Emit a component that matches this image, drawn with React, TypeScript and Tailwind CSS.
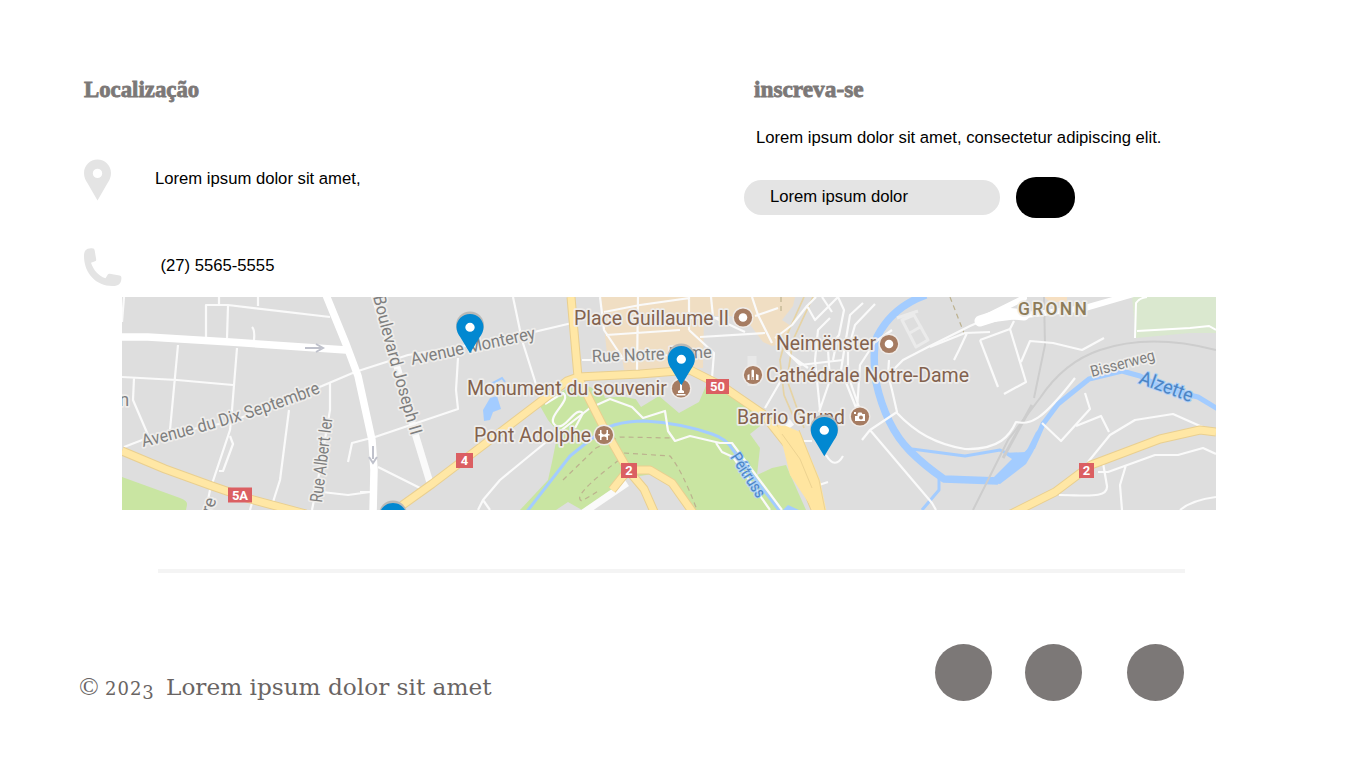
import React from "react";

const PIN =
  "M13.5 0C6 0 0 6 0 13.5 0 17.8 1.5 20.6 4 24.6L13.5 41 23 24.6C25.500 20.600 27 17.800 27 13.500 27 6 21 0 13.500 0Zm0 9.200a4.700 4.700 0 1 1 0 9.400 4.700 4.700 0 0 1 0-9.400Z";

const minorRoads = [
  "M122 322L124 297M219 297V304M206 337V305L228 305 330 317M228 306L227 338M258 297V306M252 327Q255 330 254 340",
  "M122 377L177 380 233 385M134 378L133 400 148 435M178 345L170 430M237 348L232 410 230 430 210 490 206 510M230 436L233 444 223 471H219",
  "M124 447L150 437 230 422 322 386 355 372 408 355 500 340 572 323M289 410L280 480 273 502M330 383V410L318 480 312 510M348 462L352 443 375 437 458 409 456 390 458 358",
  "M378 467L422 489M322 492L348 495 370 492M252 503L250 510M513 297L522 340 540 397M360 492H372",
  "M478 510L483 500 500 480 545 443 590 408 610 399 632 407 643 418 665 411 668 431 675 441 690 436 720 443 732 443 782 510M716 443L722 452 733 457 770 510M490 510L483 500M582 360H600L713 352",
  "M545 404L563 393C573 400 545 417 555 425S575 405 583 413L575 428",
  "M600 297L604 330 622 357M638 297L637 370M689 297V330M604 312L640 305 690 298M606 335L680 330M700 337L765 333M689 330L714 353 712 378M711 297L713 317 745 332M690 318H720M752 297L758 315 772 343M755 316L778 308",
  "M816 297L807 306 815 320 830 305 838 297M807 306L792 325 775 338M838 297L844 310 839 335 828 350 830 380 819 412M830 318L818 330 815 360 820 410M863 303L850 315 845 345 841 370 857 410M875 304L855 325 848 350 848 375 860 410M892 330L875 342 860 365 857 410",
  "M785 350L800 365 843 360M783 377L765 408M780 337L790 355 808 368M822 297L832 312M837 340L833 360",
  "M889 360L888 375 892 390 897 412 870 430 862 440M870 430L932 503 936 510M888 375L903 360 930 346 970 326 995 315M897 413C915 432 935 444 965 449 1000 450 1010 435 1016 422 1030 425 1041 422 1075 378 1110 365 1150 352L1173 358 1216 372",
  "M930 347L965 333 990 332M967 333L959 350 954 360M980 340L1010 329 1026 382 1004 394M980 340L998 387M1021 362L1030 341 1053 343 1082 350 1104 338M1010 329L1014 321",
  "M1042 423L1061 441 1090 409 1085 393M1076 426L1101 416 1109 432M1088 462L1110 435 1135 420 1173 414 1200 426 1212 430M1098 472H1108L1155 455 1178 455 1203 448 1216 454M1126 465L1120 485 1122 510M1103 463L1107 486C1108 499 1085 495 1059 495M1180 510Q1192 500 1216 497",
  "M794 441L812 441M826 455Q835 470 843 456M816 486L828 482",
];

const yellowRoads =
  "M122 451L165 469 212 486 250 499 306 514M390 514L432 484 540 402 567 381 578 377 640 374 690 370 722 386 763 414 790 448 817 514M571 297L578 377 605 430 628 470 644 489 655 514M612 490L628 470 650 470 672 483 694 514M1011 514L1055 492 1091 465 1160 439 1200 430 1216 432";

function Badge({ x, y, w, label }: { x: number; y: number; w: number; label: string }) {
  return (
    <g>
      <rect x={x} y={y} width={w} height="15" fill="#db5f62" />
      <text x={x + w / 2} y={y + 12} fill="#fff" fontSize="13" fontWeight="700" textAnchor="middle">
        {label}
      </text>
    </g>
  );
}

function Poi({ x, y, ring }: { x: number; y: number; ring?: boolean }) {
  return (
    <g>
      <circle cx={x} cy={y} r="10.600" fill="#efebe8" />
      <circle cx={x} cy={y} r="9.100" fill="#a67c62" />
      {ring && <circle cx={x} cy={y} r="4.300" fill="#fff" />}
    </g>
  );
}

function MapPin({ x, y }: { x: number; y: number }) {
  return (
    <g transform={`translate(${x - 13.5} ${y})`}>
      <circle cx="13.500" cy="11.500" r="14" fill="#b9b9b7" />
      <circle cx="13.500" cy="13.500" r="6" fill="#fff" />
      <path d={PIN} transform="scale(1 .96)" fill="#0288d1" />
    </g>
  );
}

function CityMap() {
  return (
    <svg
      viewBox="122 297 1094 213"
      className="ml-[122px] block h-[213px] w-[1094px] shrink-0 overflow-hidden"
      fontFamily="Roboto, 'Liberation Sans', sans-serif"
      fill="none"
    >
      <rect x="122" y="297" width="1094" height="213" fill="#dedede" />
      <path d="M122 477L180 498Q188 501 187 505L186 510H122Z" fill="#c9e5a2" />
      <path d="M540 406L578 381 600 392 640 400 700 378 722 390 768 420 750 434 760 448 757 475 772 468 786 465 806 510H520L548 480 552 462 558 432 548 420Z" fill="#c9e5a2" />
      <path d="M598 378L700 373 708 381 699 402 679 413 659 396 641 407 633 395 605 398Z" fill="#dedede" />
      <path d="M628 478L652 474 668 484 692 510H583Z M556 510L568 502 582 510Z" fill="#dedede" />
      <path d="M601 297H795L793 306 782 320 791 326 785 343 772 346 763 342 748 322 730 316H704L703 368 624 370 622 357 607 354Z" fill="#f0dec3" />
      <path d="M1132 297H1216V333L1190 333 1136 338Z" fill="#dae8cf" />
      <path d="M1044 297H1067V302H1050Z" fill="#f6dfc1" />

      <g stroke="#a3ccff" strokeLinejoin="round">
        <path d="M525 514L570 456 595 436Q610 421 645 421 680 423 712 434 727 439 733 450L782 514" strokeWidth="3" />
        <path d="M926 295Q892 307 877 337 872 350 876 382 886 427 910 451 925 466 944 479L998 481" strokeWidth="7.500" />
        <path d="M994 481L1020 460 1033 447 1043 424 1058 404 1089 379 1122 371 1140 376 1165 389 1198 397 1218 409" strokeWidth="5" />
        <path d="M912 449L965 456 1000 450 1017 458M939 478V490L922 510" strokeWidth="3" />
      </g>
      <path d="M994 477L1012 459 1003 453 1026 452 1036 432 1046 422 1033 452 1026 464 1000 484 980 482Z" fill="#a3ccff" />
      <path d="M490 398L497 396 501 409 493 412 490 420 484 421 483 410Z" fill="#a3ccff" />
      <path d="M491 384L502 378 505 382" stroke="#a3ccff" strokeWidth="2" />
      <path d="M783 510L788 505 799 510Z" fill="#a3ccff" />

      <g stroke="#cdcdcd" strokeWidth="2">
        <path d="M1044 297L1045 345 1034 398M973 510L1008 440 1040 398Q1064 362 1100 350 1150 333 1216 350" />
        <path d="M1003 458L1032 405" strokeWidth="3" />
      </g>
      <g stroke="#bcb18e" strokeWidth="1.200" strokeDasharray="5 4">
        <path d="M563 480L596 448 620 437 672 438M624 453L670 456Q682 470 697 510M619 460Q570 497 582 501L600 490M950 297L964 333M781 297V312" />
      </g>
      <path d="M804 297L786 337 780 360 784 395 797 425M813 297L793 340 787 380 804 428" stroke="#e6d3a4" strokeWidth="1.700" />

      <g stroke="#fafafa" strokeLinejoin="round" strokeWidth="2.200">
        {minorRoads.map((d, i) => (
          <path key={i} d={d} />
        ))}
        <path d="M122 337L148 337 230 342 346 350M326 295L346 344 358 376 372 440 374 470 373 514" stroke="#fff" strokeWidth="7.500" />
        <path d="M374 295L398 370 414 430 431 486" strokeWidth="7" />
        <path d="M583 513L627 483" strokeWidth="7" />
        <path d="M978 321L1026 315 1085 308 1137 293M978 321L1024 298" stroke="#fff" strokeWidth="6" strokeLinecap="round" />
        <path d="M980 321L1005 313 1024 315" stroke="#fff" strokeWidth="11" strokeLinecap="round" />
        <path d="M784 428L792 422" strokeWidth="7" />
        <path d="M902 320L916 347 928 340 914 315ZM897 318L918 311M908 334L922 326" stroke="#ebebeb" strokeWidth="3" />
        <path d="M752 356V386" stroke="#e8e8e8" strokeWidth="9" />
      </g>
      <path d={yellowRoads} stroke="#e9cf90" strokeWidth="9" strokeLinejoin="round" />
      <path d={yellowRoads} stroke="#ffe7a5" strokeWidth="7" strokeLinejoin="round" />
      <path d="M777 422L800 432 820 480 827 514H816L790 475Z" fill="#ffe5a0" />
      <path d="M782 434L800 459 812 488M799 430L819 480 825 510" stroke="#edd391" />
      <path d="M305 348H321M316 344L323 348 316 352M373 446V459M369 457L373 463 377 457" stroke="#bfc1cb" strokeWidth="2" />
      <path d="M1135 338L1136 303Q1139 298 1147 297M1137 331L1190 328 1209 326 1216 330" stroke="#fff" strokeWidth="2" />

      <path id="septembre" d="M143 447Q245 423 325 391" />
      <path id="boulevard" d="M373 297Q386 350 412 439" />
      <g stroke="#eeedeb" strokeWidth="3.500" strokeLinejoin="round" paintOrder="stroke">
        <g fill="#7f7f7f" fontSize="17.500">
          <text x="119.500" y="406">n</text>
          <text>
            <textPath href="#septembre" textLength="186" lengthAdjust="spacingAndGlyphs">
              Avenue du Dix Septembre
            </textPath>
          </text>
          <text transform="translate(322 503) rotate(-83)" textLength="86" lengthAdjust="spacingAndGlyphs">
            Rue Albert Ier
          </text>
          <text>
            <textPath href="#boulevard" textLength="144" lengthAdjust="spacingAndGlyphs">
              Boulevard Joseph II
            </textPath>
          </text>
          <text transform="translate(412 365) rotate(-12)" textLength="127" lengthAdjust="spacingAndGlyphs">
            Avenue Monterey
          </text>
          <text transform="translate(592 362) rotate(-2)" fontSize="17" textLength="120" lengthAdjust="spacingAndGlyphs">
            Rue Notre Dame
          </text>
          <text transform="translate(1092 377) rotate(-15)" fontSize="15.500" textLength="66" lengthAdjust="spacingAndGlyphs">
            Bisserweg
          </text>
          <text transform="translate(212 514) rotate(-72)">re</text>
        </g>
        <g fill="#83624e" fontSize="20">
          <text x="574" y="325" textLength="155" lengthAdjust="spacingAndGlyphs">Place Guillaume II</text>
          <text x="776" y="350" textLength="100" lengthAdjust="spacingAndGlyphs">Neimënster</text>
          <text x="766" y="382" textLength="203" lengthAdjust="spacingAndGlyphs">Cathédrale Notre-Dame</text>
          <text x="467" y="395" textLength="200" lengthAdjust="spacingAndGlyphs">Monument du souvenir</text>
          <text x="737" y="424" textLength="108" lengthAdjust="spacingAndGlyphs">Barrio Grund</text>
          <text x="474" y="442" textLength="117" lengthAdjust="spacingAndGlyphs">Pont Adolphe</text>
        </g>
        <text x="1018" y="315" fill="#8d7c59" fontSize="17.500" fontWeight="500" textLength="69">GRONN</text>
      </g>
      <g fill="#4c85c5" stroke="#a9cff8" strokeWidth="2" paintOrder="stroke">
        <text transform="translate(1138 383) rotate(20)" fontSize="19" textLength="56" lengthAdjust="spacingAndGlyphs">
          Alzette
        </text>
        <text transform="translate(730 457) rotate(57)" fontSize="16" textLength="50" lengthAdjust="spacingAndGlyphs">
          Péitruss
        </text>
      </g>

      <Poi x={743} y={317.5} ring />
      <Poi x={889} y={344} ring />
      <Poi x={753} y={375} />
      <Poi x={681} y={388.5} />
      <Poi x={604} y={435} />
      <Poi x={860} y={416.5} />
      <g fill="#fff">
        <path d="M747.500 380V375L749.500 374V380ZM751.500 380V370.500Q752.800 368.500 754 370.500V380H753.300V377H752.300V380ZM756 380V374L758.500 375V380Z" />
        <path d="M680 384H682V390L684 391V393H678V391L680 390ZM676.500 394H685.500V395.500H676.500Z" />
        <path d="M600 430H601.500V433Q604 436 606.500 433V430H608V434H609.500V435.500H608V440H606.500V437.500Q604 435.500 601.500 437.500V440H600V435.500H598.500V434H600Z" />
        <path fillRule="evenodd" d="M857.500 414L858.500 412.500H861.500L862.500 414H865V421H855V416H857.500ZM861 415.500A2 2 0 1 0 861 419.500 2 2 0 0 0 861 415.500ZM854 412H856V414H854Z" />
      </g>

      <Badge x={228} y={487.5} w={24} label="5A" />
      <Badge x={456} y={453} w={17} label="4" />
      <Badge x={706} y={379} w={23} label="50" />
      <Badge x={621} y={463} w={16} label="2" />
      <Badge x={1079} y={463} w={15} label="2" />

      <MapPin x={470} y={314} />
      <MapPin x={681.3} y={346} />
      <MapPin x={824.3} y={417} />
      <MapPin x={393} y={503} />
    </svg>
  );
}

export default function App() {
  return (
    <main className="flex h-[768px] w-[1366px] flex-col overflow-hidden bg-white font-['Liberation_Sans',sans-serif] text-[16.67px] leading-5 text-black">
      <div className="flex h-[297px] shrink-0 pt-[77px]">
        <section className="w-[744px] pl-[84px]">
          <h2 className="font-['Liberation_Serif',serif] text-[22.8px] font-bold leading-[26px] text-[#7c7877] [-webkit-text-stroke:0.8px_#7c7877]">
            Localização
          </h2>
          <div className="mt-[56px] flex h-[42px] items-start">
            <svg viewBox="0 0 27 42" className="h-[42px] w-[27px]" fill="#e4e4e4">
              <path d={PIN} transform="translate(0 .5)" />
            </svg>
            <p className="ml-11 mt-[10px]">Lorem ipsum dolor sit amet,</p>
          </div>
          <div className="mt-[47px] flex h-[39px] items-start">
            <svg viewBox="0 0 38 39" className="h-[39px] w-[38px]" fill="#e4e4e4">
              <path d="M0 8C0 3 2 .5 7 .3 9.500 0 10.300 .8 10.700 2.500L12.200 11.500C12.300 12.500 12 13 11 13.300L7 14.700C9.500 22 14 27.500 21.500 30.300L23.800 26.500C24.200 25.800 25 25.500 25.800 25.700L35.500 27.600C37 28 37.600 28.700 37.400 30.500 37 36 34.500 38 29 38 13 38.500 0 26 0 8Z" />
            </svg>
            <p className="ml-[38.5px] mt-2">(27) 5565-5555</p>
          </div>
        </section>
        <section>
          <h2 className="-mt-px ml-[10px] font-['Liberation_Serif',serif] text-[23.3px] font-bold leading-[26px] text-[#7c7877] [-webkit-text-stroke:0.8px_#7c7877]">
            inscreva-se
          </h2>
          <p className="ml-3 mt-[26px]">Lorem ipsum dolor sit amet, consectetur adipiscing elit.</p>
          <div className="mt-[29px] flex items-center gap-4">
            <div className="flex h-[34.5px] w-[256px] items-center rounded-full bg-[#e4e4e4] pl-[26px]">
              Lorem ipsum dolor
            </div>
            <button aria-label="Enviar" className="h-[40.5px] w-[59px] rounded-[20px] bg-black" />
          </div>
        </section>
      </div>

      <CityMap />

      <div className="ml-[158px] mt-[59px] h-1 w-[1027px] shrink-0 bg-[#f4f4f4]" />

      <footer className="mt-[71px] flex h-[57px] w-[1184px] items-start justify-between pl-[79px]">
        <p className="mt-[28px] flex h-[30px] items-baseline whitespace-pre font-['DejaVu_Serif',serif] text-[23.2px] leading-[30px] text-[#696463]">
          <span className="w-[26px] font-['Liberation_Serif',serif] text-[26px]">©</span>
          <span className="w-[61px] text-[18px] leading-[30px] tracking-[1px]">
            202<span className="relative top-1">3</span>
          </span>
          <span>Lorem ipsum dolor sit amet</span>
        </p>
        <div className="flex">
          <span className="size-[57px] rounded-full bg-[#7c7877]" />
          <span className="ml-[33px] size-[57px] rounded-full bg-[#7c7877]" />
          <span className="ml-[45px] size-[57px] rounded-full bg-[#7c7877]" />
        </div>
      </footer>
    </main>
  );
}
